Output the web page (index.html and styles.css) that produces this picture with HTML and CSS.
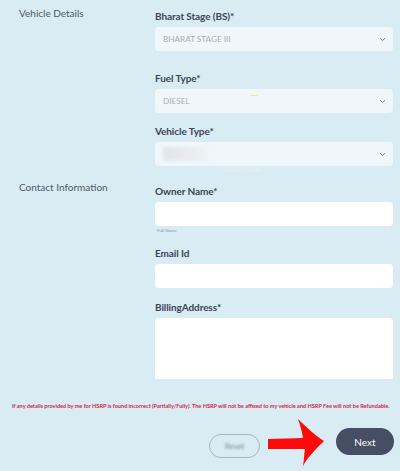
FILE: index.html
```html
<!DOCTYPE html>
<html>
<head>
<meta charset="utf-8">
<link rel="stylesheet" href="styles.css">
</head>
<body>
<div class="page">
  <div class="section sec-vehicle">
    <div class="sec-title">Vehicle Details</div>
    <div class="fields">
      <div class="field">
        <div class="label">Bharat Stage (BS)*</div>
        <div class="select"><span class="val">BHARAT STAGE III</span><svg class="chev" width="7" height="5" viewBox="0 0 7 5"><path d="M1 1.2 L3.5 3.6 L6 1.2" fill="none" stroke="#7d8690" stroke-width="1"/></svg></div>
        <div class="hint"></div>
      </div>
      <div class="field">
        <div class="label">Fuel Type*</div>
        <div class="select"><span class="val">DIESEL</span><span class="mark"></span><svg class="chev" width="7" height="5" viewBox="0 0 7 5"><path d="M1 1.2 L3.5 3.6 L6 1.2" fill="none" stroke="#7d8690" stroke-width="1"/></svg></div>
      </div>
      <div class="field last">
        <div class="label">Vehicle Type*</div>
        <div class="select"><span class="blur"></span><svg class="chev" width="7" height="5" viewBox="0 0 7 5"><path d="M1 1.2 L3.5 3.6 L6 1.2" fill="none" stroke="#7d8690" stroke-width="1"/></svg></div>
        <div class="wm">Marathi Corner</div>
      </div>
    </div>
  </div>
  <div class="section sec-contact">
    <div class="sec-title">Contact Information</div>
    <div class="fields">
      <div class="field">
        <div class="label">Owner Name*</div>
        <div class="input"></div>
        <div class="hint">Full Name</div>
      </div>
      <div class="field">
        <div class="label">Email Id</div>
        <div class="input"></div>
      </div>
      <div class="field billing last">
        <div class="label">BillingAddress*</div>
        <div class="textarea"></div>
      </div>
    </div>
  </div>
  <p class="disclaimer">If any details provided by me for HSRP is found incorrect (Partially/Fully). The HSRP will not be affixed to my vehicle and HSRP Fee will not be Refundable.</p>
  <div class="actions">
    <button class="btn reset"><span>Reset</span></button>
    <svg class="arrow" width="60" height="50" viewBox="0 0 60 50"><path d="M1 21 L36 20 C35 13 33 7 31 1 C40 10 49 18 57 23 C48 32 40 40 36 48 C37 42 37 36 38 31 L1 31 Z" fill="#ff0a0a"/></svg>
    <button class="btn next">Next</button>
  </div>
</div>
</body>
</html>
```
FILE: styles.css
```css
html, body {
  margin: 0;
  padding: 0;
  background: #d9ecf4;
}
body {
  font-family: Lato, "Noto Sans", sans-serif;
  width: 400px;
  height: 471px;
  overflow: hidden;
}
.page {
  padding: 7px 7px 0 19px;
}
.section {
  display: grid;
  grid-template-columns: 136px 238px;
}
.sec-contact {
  margin-top: 7px;
}
.sec-title {
  font-size: 10px;
  line-height: 13px;
  color: #4d5868;
}
.fields {
  padding-top: 3px;
}
.sec-contact .fields {
  padding-top: 4px;
}
.field {
  margin-bottom: 12px;
}
.field.last {
  margin-bottom: 0;
}
.billing {
  padding-top: 1px;
}
.label {
  font-size: 10px;
  font-weight: 700;
  line-height: 13px;
  height: 13px;
  color: #3c4557;
  margin-bottom: 4px;
  letter-spacing: -0.1px;
}
.select {
  position: relative;
  height: 24px;
  background: #eff7fb;
  border-radius: 4px;
  display: flex;
  align-items: center;
  padding: 0 7px 0 8px;
}
.val {
  font-size: 8.2px;
  color: #a6aeb7;
  flex: 1;
}
.chev {
  margin-left: auto;
}
.mark {
  position: absolute;
  left: 95px;
  top: 6px;
  width: 8px;
  height: 1px;
  background: #f4f27a;
}
.blur {
  width: 50px;
  height: 14px;
  background: linear-gradient(90deg, #e2e6ea, #e9edf0 60%, #f0f6f9);
  filter: blur(1.5px);
}
.wm {
  font-size: 5.5px;
  line-height: 8px;
  color: #e6f1f6;
  padding-left: 68px;
}
.input {
  height: 24px;
  background: #ffffff;
  border-radius: 4px;
}
.textarea {
  height: 61px;
  background: #ffffff;
  border-radius: 4px 4px 0 0;
}
.hint {
  height: 9px;
  font-size: 4.5px;
  line-height: 9px;
  color: #8c96a0;
  padding-left: 2px;
}
.disclaimer {
  margin: 23px 0 0 -7px;
  font-size: 5.55px;
  line-height: 8px;
  font-weight: 700;
  color: #cc2a38;
  white-space: nowrap;
  width: 378px;
}
.actions {
  position: relative;
  display: flex;
  justify-content: flex-end;
  align-items: flex-start;
  margin-top: 18px;
}
.btn {
  font-family: Lato, "Noto Sans", sans-serif;
  border-radius: 14px;
  cursor: pointer;
}
.reset {
  width: 51px;
  height: 24px;
  margin-top: 6px;
  margin-right: 76px;
  background: transparent;
  border: 1px solid #a9b6be;
  font-size: 8px;
  color: #7b8691;
}
.reset span {
  display: inline-block;
  filter: blur(1.2px);
  color: #7d8892;
}
.next {
  width: 58px;
  height: 27px;
  background: #464e64;
  border: none;
  color: #ffffff;
  font-size: 10px;
  margin-right: -1px;
}
.arrow {
  position: absolute;
  left: 248px;
  top: -10px;
}
```
